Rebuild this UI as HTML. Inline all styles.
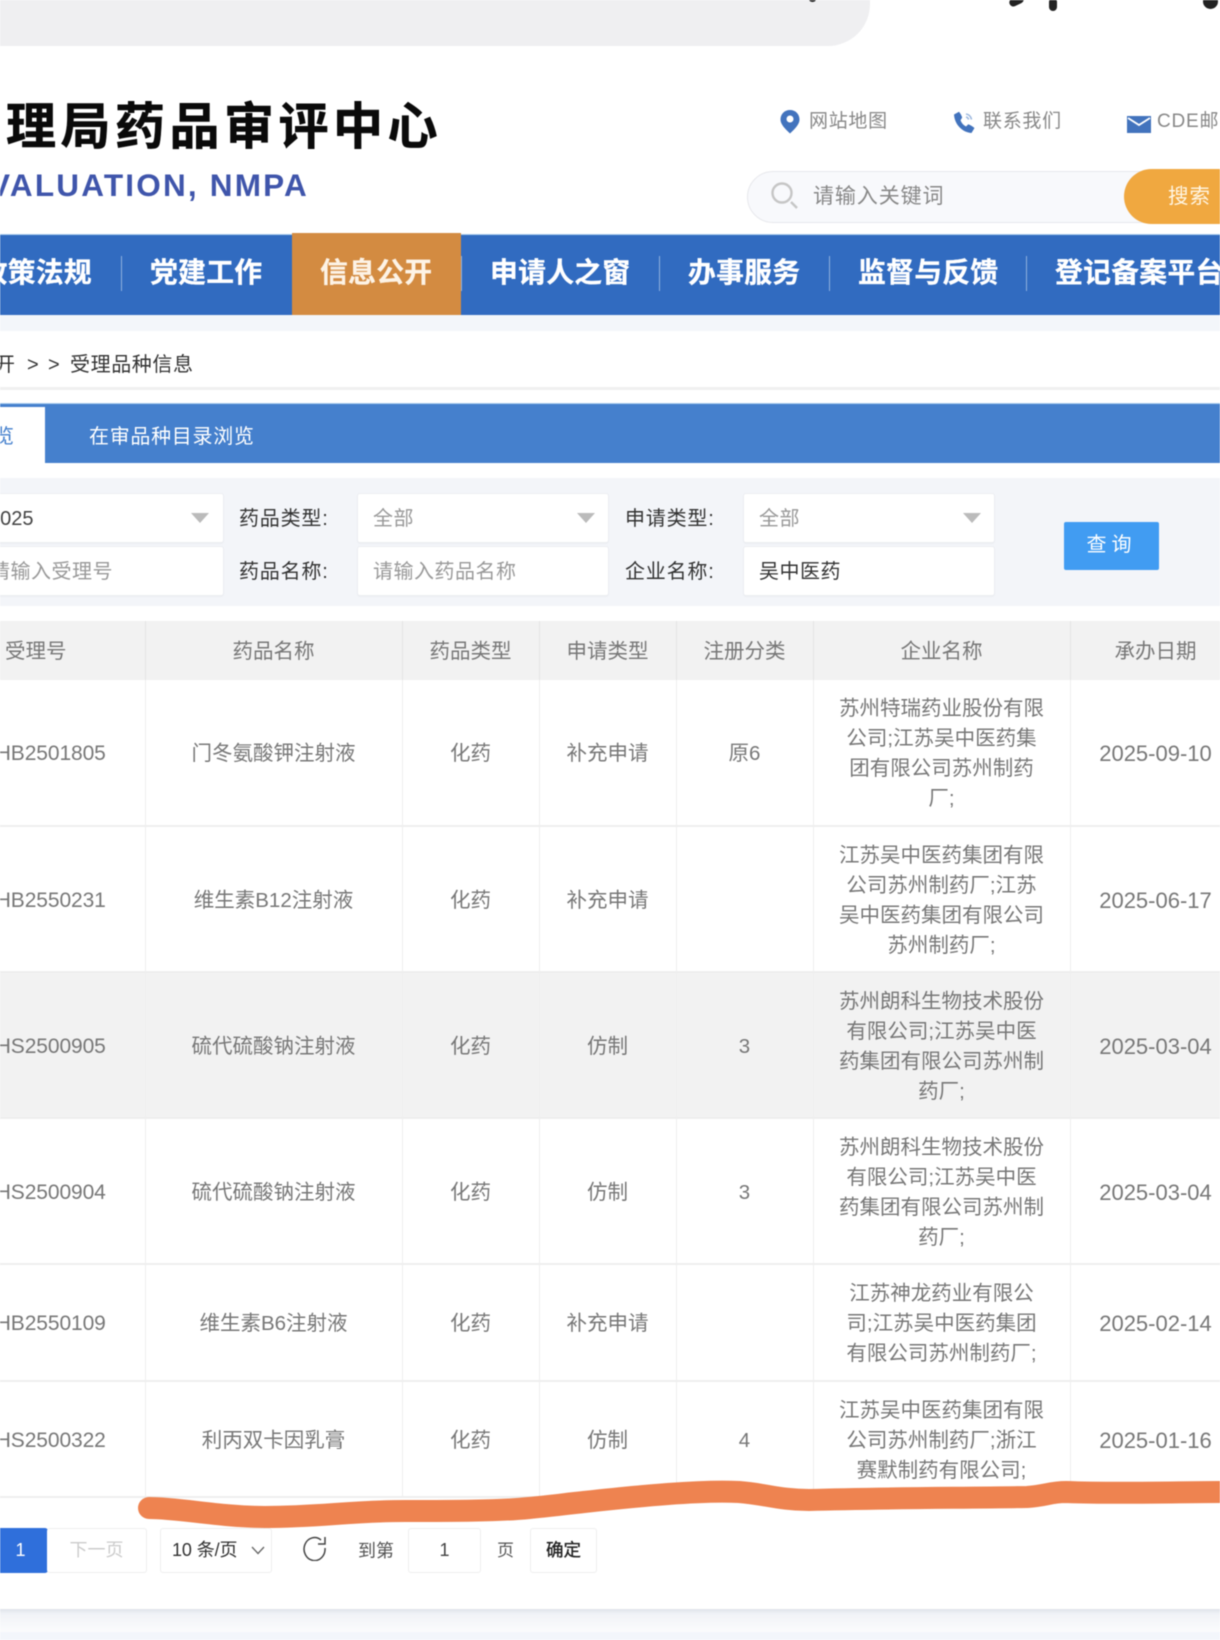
<!DOCTYPE html>
<html lang="zh-CN"><head><meta charset="utf-8"><title>受理品种信息</title>
<style>
*{box-sizing:border-box}
html,body{margin:0;padding:0;background:#fff}
body{position:relative;width:1220px;height:1640px;overflow:hidden;font-family:"Liberation Sans","Noto Sans CJK SC",sans-serif;color:#333;font-size:20px}
#w{position:absolute;left:0;top:0;width:1220px;height:1640px;overflow:hidden;filter:blur(.45px)}
.a{position:absolute;white-space:nowrap}
.nav{position:absolute;top:234px;left:0;width:1220px;height:81px;background:#316bc0;border-top:1px solid #a9cdec}
.n{position:absolute;top:253px;font-size:27.8px;font-weight:700;color:#fff;line-height:40px;white-space:nowrap;letter-spacing:.3px;-webkit-text-stroke:.3px currentColor}
.sep{position:absolute;top:256px;width:1px;height:35px;background:#8fb0de}
.inp{position:absolute;height:50px;background:#fff;border:1px solid #eceef2;border-radius:3px;box-shadow:0 1px 1px rgba(0,0,0,.03)}
.ph{position:absolute;line-height:28px;color:#999;white-space:nowrap;letter-spacing:.5px;font-size:20px}
.lb{position:absolute;line-height:28px;color:#333;white-space:nowrap;font-size:20px;letter-spacing:.8px}
.tri{position:absolute;top:513px;width:0;height:0;border-left:9px solid transparent;border-right:9px solid transparent;border-top:10px solid #bbb}
table{position:absolute;left:-73px;top:621px;border-collapse:collapse;table-layout:fixed;width:1314px}
th,td{padding:3px 0 0;text-align:center;vertical-align:middle;color:#777;font-size:20.5px;font-weight:400;line-height:30px;border-right:1px solid #eeeeee}
th{background:#f2f2f2;height:59px;border-right:1px solid #e4e4e4}
td{border-bottom:2px solid #eeeeee}
td.id{padding-left:30px;font-size:21px;letter-spacing:-.1px}
td.d{font-size:22px;letter-spacing:0}
tr.g td{background:#f2f2f2}
.box{position:absolute;top:1528px;height:45px;border:1px solid #eee;border-radius:3px;background:#fff;text-align:center;line-height:43px;font-size:18px;white-space:nowrap}
</style></head><body><div id="w">

<div class="a" style="left:0;top:0;width:870px;height:46px;background:#efeff1;border-bottom-right-radius:42px"></div>
<div class="a" style="left:809px;top:-4px;width:7px;height:6px;background:#222;border-radius:50%"></div>
<div class="a" style="left:1009px;top:-3px;width:15px;height:8px;background:#222;border-radius:4px;transform:rotate(-25deg)"></div>
<div class="a" style="left:1049px;top:-2px;width:8px;height:13px;background:#222;border-radius:4px"></div>
<div class="a" style="left:1203px;top:-6px;width:15px;height:15px;background:#222;border-radius:50%"></div>

<div class="a" style="left:6px;top:93px;font-size:50px;line-height:68px;font-weight:700;color:#0a0a0a;letter-spacing:4.5px;-webkit-text-stroke:.6px #0a0a0a">理局药品审评中心</div>
<div class="a" style="right:911px;top:166px;font-size:31.5px;line-height:38px;font-weight:700;color:#3f55ab;letter-spacing:2.2px">EVALUATION, NMPA</div>

<svg class="a" style="left:780px;top:110px" width="20" height="24" viewBox="0 0 20 24"><path d="M10 0C4.500 0 .5 4 .5 9.500c0 5.500 6 10.500 9.500 14 3.500-3.500 9.500-8.500 9.500-14C19.500 4 15.500 0 10 0z" fill="#4273bd"/><circle cx="10" cy="9" r="3.500" fill="#fff"/></svg>
<div class="a" style="left:809px;top:108px;font-size:19px;line-height:28px;color:#888;letter-spacing:.7px">网站地图</div>
<svg class="a" style="left:953px;top:111px" width="24" height="23" viewBox="0 0 24 23"><path d="M1 3.500 6 .8c1.500 1.700 2.500 3.700 3.200 5.700L7.500 9.200c1 2.800 3 5 5.500 6.300l2.300-2.200c2.300.9 4.300 2.100 6.200 3.700L18.500 22C9 21.500 1.500 13 1 3.500z" fill="#4273bd"/><path d="M13 3c3 .5 5 2.700 5.500 5.500M13 6c1.300.3 2.300 1.300 2.600 2.600" stroke="#9db8de" stroke-width="1.600" fill="none"/></svg>
<div class="a" style="left:983px;top:108px;font-size:19px;line-height:28px;color:#888;letter-spacing:.7px">联系我们</div>
<svg class="a" style="left:1127px;top:116px" width="24" height="17" viewBox="0 0 24 17"><rect width="24" height="17" fill="#4273bd"/><path d="M1 2l11 7 11-7" stroke="#fff" stroke-width="1.800" fill="none"/></svg>
<div class="a" style="left:1157px;top:108px;font-size:19px;line-height:28px;color:#888;letter-spacing:.8px">CDE邮箱</div>

<div class="a" style="left:747px;top:171px;width:420px;height:52px;background:#f8f9fc;border:1px solid #e7e8ec;border-radius:26px"></div>
<svg class="a" style="left:770px;top:182px" width="30" height="28" viewBox="0 0 30 28"><circle cx="12" cy="11" r="9.500" fill="none" stroke="#c6c6c6" stroke-width="2.400"/><path d="M21 20l6 6" stroke="#c6c6c6" stroke-width="2.400"/></svg>
<div class="a" style="left:813px;top:182px;font-size:21px;line-height:30px;color:#888;letter-spacing:.9px">请输入关键词</div>
<div class="a" style="left:1124px;top:169px;width:140px;height:55px;background:#f0a840;border-radius:28px"></div>
<div class="a" style="left:1168px;top:182px;font-size:20.5px;line-height:30px;color:#fff6e4;letter-spacing:1px">搜索</div>

<div class="nav"></div>
<div class="a" style="left:292px;top:233px;width:169px;height:82px;background:#d38b41"></div>
<div class="n" style="right:1128px">政策法规</div>
<div class="sep" style="left:121px"></div>
<div class="n" style="left:150px">党建工作</div>
<div class="n" style="left:320px;color:#fdf3e6">信息公开</div>
<div class="sep" style="left:461px"></div>
<div class="n" style="left:490px">申请人之窗</div>
<div class="sep" style="left:659px"></div>
<div class="n" style="left:688px">办事服务</div>
<div class="sep" style="left:829px"></div>
<div class="n" style="left:858px">监督与反馈</div>
<div class="sep" style="left:1026px"></div>
<div class="n" style="left:1055px">登记备案平台</div>
<div class="a" style="left:0;top:315px;width:1220px;height:16px;background:#f3f6fa"></div>

<div class="a" style="left:-5px;top:351px;line-height:28px;color:#333">开</div>
<div class="a" style="left:27px;top:351px;line-height:28px;color:#333">&gt;</div>
<div class="a" style="left:48px;top:351px;line-height:28px;color:#333">&gt;</div>
<div class="a" style="left:70px;top:351px;line-height:28px;color:#333;letter-spacing:.6px">受理品种信息</div>
<div class="a" style="left:0;top:387px;width:1220px;height:3px;background:#f0f0f0"></div>

<div class="a" style="left:0;top:403px;width:1220px;height:60px;background:#4580cd;border-top:1px solid #a9cdec"></div>
<div class="a" style="left:0;top:407px;width:45px;height:56px;background:#fff"></div>
<div class="a" style="left:-6px;top:423px;line-height:28px;color:#4580cd">览</div>
<div class="a" style="left:89px;top:423px;line-height:28px;color:#fff;letter-spacing:.7px">在审品种目录浏览</div>

<div class="a" style="left:0;top:478px;width:1220px;height:128px;background:#f3f5f9"></div>
<div class="inp" style="left:-20px;top:493px;width:244px"></div>
<div class="inp" style="left:-20px;top:546px;width:244px"></div>
<div class="inp" style="left:357px;top:493px;width:252px"></div>
<div class="inp" style="left:357px;top:546px;width:252px"></div>
<div class="inp" style="left:743px;top:493px;width:252px"></div>
<div class="inp" style="left:743px;top:546px;width:252px"></div>
<div class="ph" style="left:-11px;top:505px;color:#444;letter-spacing:0">2025</div>
<div class="ph" style="left:-10px;top:558px">请输入受理号</div>
<div class="lb" style="left:239px;top:505px">药品类型:</div>
<div class="lb" style="left:239px;top:558px">药品名称:</div>
<div class="lb" style="left:625px;top:505px">申请类型:</div>
<div class="lb" style="left:625px;top:558px">企业名称:</div>
<div class="ph" style="left:373px;top:505px">全部</div>
<div class="ph" style="left:373px;top:558px">请输入药品名称</div>
<div class="ph" style="left:759px;top:505px">全部</div>
<div class="ph" style="left:759px;top:558px;color:#333">吴中医药</div>
<div class="tri" style="left:191px"></div><div class="tri" style="left:577px"></div><div class="tri" style="left:963px"></div>
<div class="a" style="left:1064px;top:522px;width:95px;height:48px;background:#419cf2;border-radius:2px;color:#fff;text-align:center;line-height:47px;font-size:20px;letter-spacing:5px">查询</div>

<table>
<colgroup><col style="width:218px"><col style="width:257px"><col style="width:137px"><col style="width:137px"><col style="width:137px"><col style="width:257px"><col style="width:171px"></colgroup>
<tr><th>受理号</th><th>药品名称</th><th>药品类型</th><th>申请类型</th><th>注册分类</th><th>企业名称</th><th>承办日期</th></tr>
<tr style="height:146px"><td class="id">HB2501805</td><td>门冬氨酸钾注射液</td><td>化药</td><td>补充申请</td><td>原6</td><td>苏州特瑞药业股份有限<br>公司;江苏吴中医药集<br>团有限公司苏州制药<br>厂;</td><td class="d">2025-09-10</td></tr>
<tr style="height:146px"><td class="id">HB2550231</td><td>维生素B12注射液</td><td>化药</td><td>补充申请</td><td></td><td>江苏吴中医药集团有限<br>公司苏州制药厂;江苏<br>吴中医药集团有限公司<br>苏州制药厂;</td><td class="d">2025-06-17</td></tr>
<tr class="g" style="height:146px"><td class="id">HS2500905</td><td>硫代硫酸钠注射液</td><td>化药</td><td>仿制</td><td>3</td><td>苏州朗科生物技术股份<br>有限公司;江苏吴中医<br>药集团有限公司苏州制<br>药厂;</td><td class="d">2025-03-04</td></tr>
<tr style="height:146px"><td class="id">HS2500904</td><td>硫代硫酸钠注射液</td><td>化药</td><td>仿制</td><td>3</td><td>苏州朗科生物技术股份<br>有限公司;江苏吴中医<br>药集团有限公司苏州制<br>药厂;</td><td class="d">2025-03-04</td></tr>
<tr style="height:117px"><td class="id">HB2550109</td><td>维生素B6注射液</td><td>化药</td><td>补充申请</td><td></td><td>江苏神龙药业有限公<br>司;江苏吴中医药集团<br>有限公司苏州制药厂;</td><td class="d">2025-02-14</td></tr>
<tr style="height:116px"><td class="id">HS2500322</td><td>利丙双卡因乳膏</td><td>化药</td><td>仿制</td><td>4</td><td>江苏吴中医药集团有限<br>公司苏州制药厂;浙江<br>赛默制药有限公司;</td><td class="d">2025-01-16</td></tr>
</table>

<svg class="a" style="left:0;top:1470px" width="1220" height="70" viewBox="0 1470 1220 70"><path d="M149 1508C180 1508 220 1517 265 1517 320 1517 350 1511 405 1511 450 1511 500 1511 529 1508 550 1506 565 1504 584 1502 640 1496 700 1490 739 1492 765 1494 780 1500 809 1500 880 1498 960 1498 1027 1497 1045 1496 1050 1492 1066 1492 1120 1494 1170 1492 1230 1492" fill="none" stroke="#ee8350" stroke-width="22" stroke-linecap="round" stroke-linejoin="round"/></svg>

<div class="box" style="left:-40px;width:88px;background:#2f6fdb;border-color:#2f6fdb;color:#fff;padding-left:33px">1</div>
<div class="box" style="left:47px;width:100px;color:#ccc;border-left:0">下一页</div>
<div class="box" style="left:160px;width:112px;color:#333;text-align:left;padding-left:11px;letter-spacing:-.1px">10 条/页</div>
<svg class="a" style="left:251px;top:1546px" width="14" height="9" viewBox="0 0 14 9"><path d="M1 1l6 6.500L13 1" fill="none" stroke="#666" stroke-width="1.300"/></svg>
<svg class="a" style="left:300px;top:1535px" width="28" height="26" viewBox="0 0 28 26"><path d="M21 5A10.500 11.500 0 1 0 25 13" fill="none" stroke="#444" stroke-width="1.500"/><path d="M25 2v7h-7" fill="none" stroke="#444" stroke-width="1.500"/></svg>
<div class="a" style="left:358px;top:1537px;font-size:18px;line-height:28px;color:#555">到第</div>
<div class="box" style="left:408px;width:73px;color:#444">1</div>
<div class="a" style="left:497px;top:1537px;font-size:17px;line-height:28px;color:#555">页</div>
<div class="box" style="left:530px;width:67px;color:#222;font-size:17.5px;-webkit-text-stroke:.35px #222">确定</div>

<div class="a" style="left:0;top:1609px;width:1220px;height:23px;background:linear-gradient(#dfe3ea 0,#f1f3f7 5px,#fbfcfd 100%)"></div>
<div class="a" style="left:0;top:1632px;width:1220px;height:8px;background:#f3f6fb"></div>
</div></body></html>
